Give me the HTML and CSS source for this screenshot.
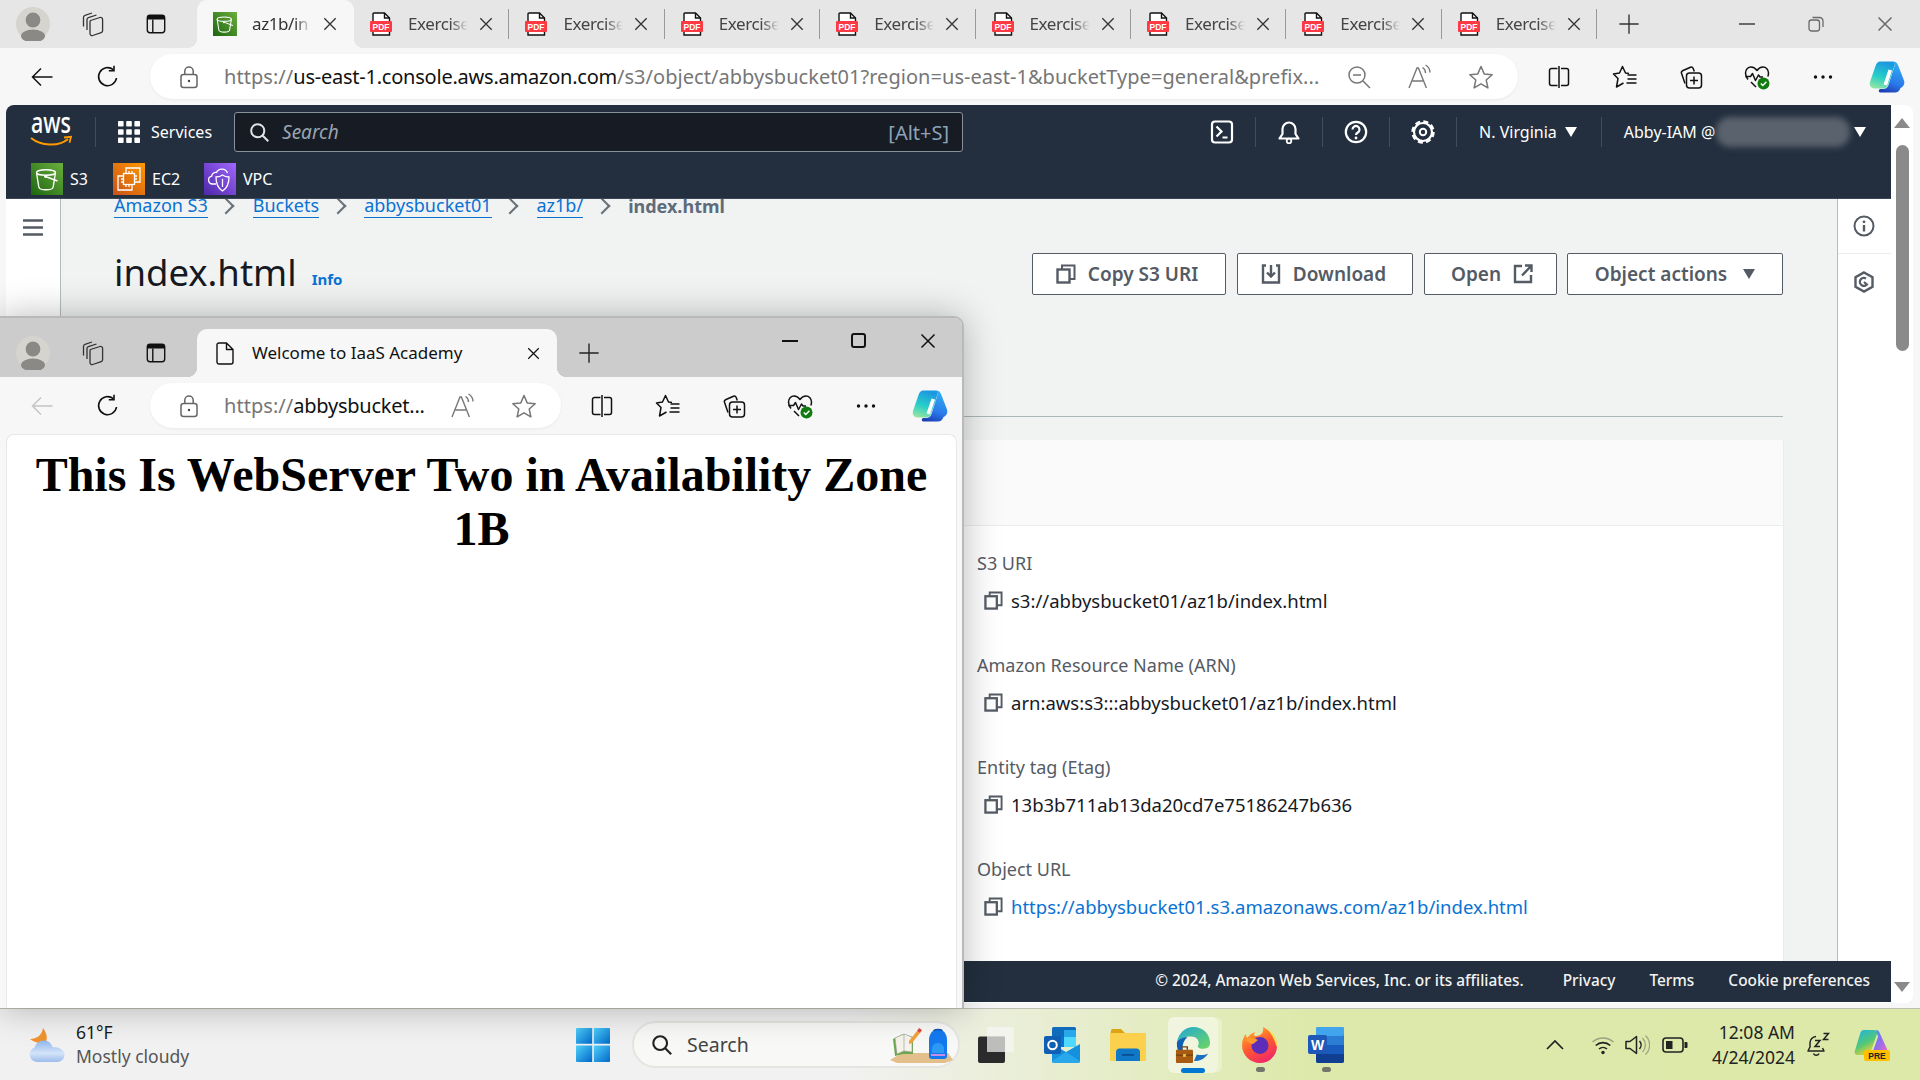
FILE: index.html
```html
<!DOCTYPE html>
<html lang="en">
<head>
<meta charset="utf-8">
<title>index.html</title>
<link rel="stylesheet" href="styles.css">
</head>
<body>
<svg class="defs" aria-hidden="true">
  <defs>
    <linearGradient id="g-s3" x1="0" y1="1" x2="1" y2="0"><stop offset="0" stop-color="#1b660f"/><stop offset="1" stop-color="#6cae3e"/></linearGradient>
    <linearGradient id="g-ec2" x1="0" y1="1" x2="1" y2="0"><stop offset="0" stop-color="#c8511b"/><stop offset="1" stop-color="#f90"/></linearGradient>
    <linearGradient id="g-vpc" x1="0" y1="1" x2="1" y2="0"><stop offset="0" stop-color="#4d27a8"/><stop offset="1" stop-color="#a166ff"/></linearGradient>
    <linearGradient id="g-cop1" x1="0.5" y1="0" x2="0.2" y2="1"><stop offset="0" stop-color="#1b98e0"/><stop offset="0.55" stop-color="#28cfc8"/><stop offset="1" stop-color="#98e6a0"/></linearGradient>
    <linearGradient id="g-cop2" x1="0.6" y1="0" x2="0.3" y2="1"><stop offset="0" stop-color="#30b0f0"/><stop offset="0.65" stop-color="#2a78ea"/><stop offset="1" stop-color="#1c40b4"/></linearGradient>
    <linearGradient id="g-cloud" x1="0" y1="0" x2="0" y2="1"><stop offset="0" stop-color="#8fb6ee"/><stop offset="0.6" stop-color="#d4e3f8"/><stop offset="1" stop-color="#9bbcec"/></linearGradient>
    <linearGradient id="g-win" x1="0" y1="0" x2="1" y2="1"><stop offset="0" stop-color="#4fd0fb"/><stop offset="1" stop-color="#0068c8"/></linearGradient>
    <linearGradient id="g-edge" x1="0" y1="0" x2="1" y2="1"><stop offset="0" stop-color="#1fa8d8"/><stop offset="1" stop-color="#6fd660"/></linearGradient>
    <linearGradient id="g-fox" x1="0.2" y1="0" x2="0.7" y2="1"><stop offset="0" stop-color="#ffb52e"/><stop offset="0.5" stop-color="#ff5a2e"/><stop offset="1" stop-color="#f0246e"/></linearGradient>
    <linearGradient id="g-pre" x1="0" y1="0" x2="1" y2="1"><stop offset="0" stop-color="#2aa8ea"/><stop offset="0.5" stop-color="#8a6ff0"/><stop offset="1" stop-color="#f06ac0"/></linearGradient>
    <linearGradient id="g-pre2" x1="0" y1="0" x2="0.5" y2="1"><stop offset="0" stop-color="#1fb0e8"/><stop offset="0.6" stop-color="#50c878"/><stop offset="1" stop-color="#f0d030"/></linearGradient>

    <symbol id="i-avatar" viewBox="0 0 34 34"><circle cx="17" cy="17" r="17" fill="#d6d4cf"/><circle cx="17" cy="13" r="7.4" fill="#8b8985"/><ellipse cx="17" cy="29" rx="12" ry="6.5" fill="#8b8985"/></symbol>
    <symbol id="i-work" viewBox="0 0 26 26"><g fill="none" stroke="#333" stroke-width="1.3" stroke-linejoin="round"><path d="M10.5 9.5l9.5-3a2 2 0 0 1 2.6 1.9v11.3a2 2 0 0 1-1.4 1.9l-8.5 2.9a2 2 0 0 1-2.7-1.9V11.4a2 2 0 0 1 .5-1.9z"/><path d="M7 19V8.6A2 2 0 0 1 8.4 6.700l8.100-2.700"/><path d="M3.500 15.500V6.200A2 2 0 0 1 5 4.300l7-2.300"/></g></symbol>
    <symbol id="i-vtabs" viewBox="0 0 24 24"><rect x="2.500" y="2.500" width="19" height="19" rx="3" fill="none" stroke="#111" stroke-width="1.5"/><path d="M2.500 5.500a3 3 0 0 1 3-3h13a3 3 0 0 1 3 3V7h-19z" fill="#111"/><path d="M8.500 7v14.500" stroke="#111" stroke-width="1.5"/></symbol>
    <symbol id="i-x" viewBox="0 0 16 16"><path d="M1.500 1.500l13 13M14.500 1.500l-13 13" fill="none" stroke="currentColor" stroke-width="1.500"/></symbol>
    <symbol id="i-plus" viewBox="0 0 24 24"><path d="M12 1.500v21M1.500 12h21" fill="none" stroke="currentColor" stroke-width="1.500"/></symbol>
    <symbol id="i-pdf" viewBox="0 0 24 24"><path d="M4 23V2a1 1 0 0 1 1-1h10.500L20.500 6v17z" fill="#fff" stroke="#111" stroke-width="1.400"/><path d="M15.500 1v5h5" fill="none" stroke="#111" stroke-width="1.400"/><rect x="1" y="9" width="22" height="11" rx="1" fill="#fb3a43"/><text x="12" y="17.800" text-anchor="middle" class="svg-pdf">PDF</text></symbol>
    <symbol id="i-s3" viewBox="0 0 32 32"><rect width="32" height="32" fill="url(#g-s3)"/><g fill="none" stroke="#fff" stroke-width="1.400"><ellipse cx="15" cy="9.500" rx="9.500" ry="2.800"/><path d="M5.500 9.500l2.300 14.500c.3 1.800 3.600 2.800 7.200 2.800s6.900-1 7.200-2.800l2.300-14.500"/><path d="M14.500 13.500l12 4.500"/></g><circle cx="14.500" cy="13.500" r="1.400" fill="#fff"/></symbol>
    <symbol id="i-ec2" viewBox="0 0 32 32"><rect width="32" height="32" fill="url(#g-ec2)"/><g fill="none" stroke="#fff" stroke-width="1.300"><path d="M13 8V5h14v14h-3M8 13H5v14h14v-3"/><rect x="10.500" y="10.500" width="11" height="11"/><path d="M13 8v2.500M16 8v2.500M19 8v2.500M13 21.500V24M16 21.500V24M19 21.500V24M8 13h2.500M8 16h2.500M8 19h2.500M21.500 13H24M21.500 16H24M21.500 19H24"/></g></symbol>
    <symbol id="i-vpc" viewBox="0 0 32 32"><rect width="32" height="32" fill="url(#g-vpc)"/><g fill="none" stroke="#fff" stroke-width="1.300"><path d="M12 21H8.500a4 4 0 0 1-.8-7.900 4 4 0 0 1 4.800-3.700A6 6 0 0 1 23.500 10"/><path d="M18.500 12c2 1.500 4 2 6.500 2 0 6-1.500 11-6.500 14-5-3-6.500-8-6.500-14 2.500 0 4.500-.5 6.500-2z"/><path d="M18.500 16v8"/></g></symbol>
    <symbol id="i-back" viewBox="0 0 24 24"><path d="M22.500 12H2.500M11 3.500L2.500 12l8.500 8.500" fill="none" stroke="currentColor" stroke-width="1.500"/></symbol>
    <symbol id="i-reload" viewBox="0 0 24 24"><path d="M20.500 13a9 9 0 1 1-3.200-8.300" fill="none" stroke="#111" stroke-width="1.600"/><path d="M18 .8v5h-5.200" fill="none" stroke="#111" stroke-width="1.600"/></symbol>
    <symbol id="i-lock" viewBox="0 0 24 24"><rect x="4" y="9.500" width="16" height="13" rx="2.500" fill="none" stroke="#666" stroke-width="1.500"/><path d="M7.800 9.500V6.300a4.200 4.200 0 0 1 8.400 0v3.200" fill="none" stroke="#666" stroke-width="1.500"/><circle cx="12" cy="16" r="1.200" fill="#444"/></symbol>
    <symbol id="i-zoom" viewBox="0 0 24 24"><g fill="none" stroke="#777" stroke-width="1.500"><circle cx="10" cy="10" r="8"/><path d="M16 16l7 7M6 10h8"/></g></symbol>
    <symbol id="i-read" viewBox="0 0 26 26"><g fill="none" stroke="#777" stroke-width="1.400"><path d="M2 24L10 4h1.400l8 20M5.500 17h10.400"/><path d="M15.500 3.500c2.200 1.200 3 3 3 5.500M18.500 1c3 1.700 4.500 4.300 4.500 7.500"/></g></symbol>
    <symbol id="i-star" viewBox="0 0 26 26"><path d="M13 2.500l3.200 7.400 8 .8-6 5.300 1.700 7.900-6.900-4.100-6.900 4.100 1.700-7.900-6-5.300 8-.8z" fill="none" stroke="#777" stroke-width="1.500" stroke-linejoin="round"/></symbol>
    <symbol id="i-split" viewBox="0 0 24 24"><g fill="none" stroke="#111" stroke-width="1.500"><path d="M10.500 3.500H4.500a2 2 0 0 0-2 2v13a2 2 0 0 0 2 2h6M14 3.500h5.500a2 2 0 0 1 2 2v13a2 2 0 0 1-2 2H14"/><path d="M12 1v22"/></g></symbol>
    <symbol id="i-favs" viewBox="0 0 26 26"><g fill="none" stroke="#111" stroke-width="1.500" stroke-linejoin="round"><path d="M17 9.500L13.500 9 10.500 2.500 7.500 9 1.500 10 6 14.500 4.500 23 11.500 19"/><path d="M15.500 11h9M15.500 15h9M14.500 19h10"/></g></symbol>
    <symbol id="i-coll" viewBox="0 0 26 26"><g fill="none" stroke="#111" stroke-width="1.500" stroke-linejoin="round"><path d="M7 19.500L3.500 9.300a2 2 0 0 1 1-2.500l8-3.600a2 2 0 0 1 2.600 1l1.200 3.300"/><rect x="8.500" y="9" width="15" height="15" rx="3"/><path d="M16 12.500v8M12 16.500h8"/></g></symbol>
    <symbol id="i-health" viewBox="0 0 26 26"><g fill="none" stroke="#111" stroke-width="1.500" stroke-linejoin="round"><path d="M4 15.500C2 13 1.500 11 1.500 9c0-3.500 2.500-6 5.500-6 2.500 0 4.500 1.300 6 3.500C14.500 4.300 16.500 3 19 3c3 0 5.500 2.500 5.500 6 0 1.300-.2 2.300-.7 3.500"/><path d="M1.500 12.500h5l2-3 3 7 3-5.500 1.500 2h3"/><path d="M7 18l5 5"/></g><circle cx="19.500" cy="19.500" r="6" fill="#107c10"/><path d="M16.800 19.500l2 2 3.600-3.800" fill="none" stroke="#fff" stroke-width="1.500"/></symbol>
    <symbol id="i-more" viewBox="0 0 24 24"><circle cx="4.500" cy="12" r="1.700" fill="#111"/><circle cx="12" cy="12" r="1.700" fill="#111"/><circle cx="19.500" cy="12" r="1.700" fill="#111"/></symbol>
    <symbol id="i-copilot" viewBox="0 0 36 32"><path d="M11 .5h12.500c2 0 2.800 1.200 2.300 3L19 24c-.8 2.500-2.500 3.500-5 3.500H5.500C2 27.500 0 24.500 1 21L6.500 5C7.500 2 9 .5 11 .5z" fill="url(#g-cop1)"/><path d="M24 .5c2.500 0 4 1 5 3.500l6 15.500c1 3.500-.5 6-3.500 7.500-1 3-3 4.500-5.500 4.500H12c-2.500 0-3-2-1-3.500h3c3 0 4.500-1.500 5.500-4l6-19c.5-2 .5-3.500-1.500-4.500z" fill="url(#g-cop2)"/><path d="M19.500 8.500l3.500 1-5 15-3.500-1z" fill="#fff"/></symbol>
    <symbol id="i-grid" viewBox="0 0 22 22"><g fill="#fff"><rect width="5.600" height="5.600" rx=".8"/><rect x="8.200" width="5.600" height="5.600" rx=".8"/><rect x="16.400" width="5.600" height="5.600" rx=".8"/><rect y="8.200" width="5.600" height="5.600" rx=".8"/><rect x="8.200" y="8.200" width="5.600" height="5.600" rx=".8"/><rect x="16.400" y="8.200" width="5.600" height="5.600" rx=".8"/><rect y="16.400" width="5.600" height="5.600" rx=".8"/><rect x="8.200" y="16.400" width="5.600" height="5.600" rx=".8"/><rect x="16.400" y="16.400" width="5.600" height="5.600" rx=".8"/></g></symbol>
    <symbol id="i-search" viewBox="0 0 24 24"><circle cx="10" cy="10" r="7.500" fill="none" stroke="currentColor" stroke-width="2.300"/><path d="M15.500 15.500l6.500 6.500" stroke="currentColor" stroke-width="2.300"/></symbol>
    <symbol id="i-term" viewBox="0 0 24 24"><rect x="2" y="1.500" width="20" height="21" rx="3" fill="none" stroke="#fff" stroke-width="2.200"/><path d="M6.500 6.500l5 5-5 5" fill="none" stroke="#fff" stroke-width="2.200"/><path d="M12.500 17.500h5" stroke="#fff" stroke-width="2.200"/></symbol>
    <symbol id="i-bell" viewBox="0 0 24 24"><path d="M12 2.500a6.500 6.500 0 0 0-6.500 6.500v5L2.500 18.500h19L18.500 14V9A6.500 6.500 0 0 0 12 2.500z" fill="none" stroke="#fff" stroke-width="2.200" stroke-linejoin="round"/><circle cx="12" cy="21" r="2.300" fill="none" stroke="#fff" stroke-width="1.800"/></symbol>
    <symbol id="i-help" viewBox="0 0 24 24"><circle cx="12" cy="12" r="10.200" fill="none" stroke="#fff" stroke-width="2.200"/><path d="M8.500 9.500a3.500 3.500 0 1 1 5.300 3c-1.200.7-1.800 1.300-1.800 2.500" fill="none" stroke="#fff" stroke-width="2.200"/><circle cx="12" cy="18" r="1.400" fill="#fff"/></symbol>
    <symbol id="i-gear" viewBox="0 0 24 24"><circle cx="12" cy="12" r="9" fill="none" stroke="#fff" stroke-width="2.200"/><circle cx="12" cy="12" r="10.500" fill="none" stroke="#fff" stroke-width="2.500" stroke-dasharray="5 3.250"/><circle cx="12" cy="12" r="3.200" fill="none" stroke="#fff" stroke-width="2"/></symbol>
    <symbol id="i-burger" viewBox="0 0 20 17"><path d="M0 1.500h20M0 8.500h20M0 15.500h20" stroke="#545b64" stroke-width="2.600"/></symbol>
    <symbol id="i-info" viewBox="0 0 22 22"><circle cx="11" cy="11" r="9.500" fill="none" stroke="#545b64" stroke-width="2"/><path d="M11 10v6.500" stroke="#545b64" stroke-width="2.400"/><circle cx="11" cy="6.800" r="1.400" fill="#545b64"/></symbol>
    <symbol id="i-hex" viewBox="0 0 22 22"><path d="M11 1.500l8.500 4.800v9.400L11 20.500l-8.500-4.800V6.300z" fill="none" stroke="#545b64" stroke-width="2.400"/><path d="M14.500 12.500A4 4 0 1 1 13 7.500M11 11l3.500 3" fill="none" stroke="#545b64" stroke-width="2.200"/></symbol>
    <symbol id="i-copy" viewBox="0 0 20 20"><rect x="1.500" y="5.500" width="12" height="13" fill="none" stroke="#545b64" stroke-width="2.400"/><path d="M6 5V1.500h12.500V15H14" fill="none" stroke="#545b64" stroke-width="2"/></symbol>
    <symbol id="i-down" viewBox="0 0 20 20"><path d="M5 1.500H2v17h16v-17h-3" fill="none" stroke="#545b64" stroke-width="2.400"/><path d="M10 1v11M6 8.500l4 4 4-4" fill="none" stroke="#545b64" stroke-width="2.400"/></symbol>
    <symbol id="i-ext" viewBox="0 0 20 20"><path d="M9 2H2v16h16v-7" fill="none" stroke="#545b64" stroke-width="2.400"/><path d="M12 1.500h6.500V8M18 2l-9 9.500" fill="none" stroke="#545b64" stroke-width="2.400"/></symbol>
    <symbol id="i-doc" viewBox="0 0 18 23"><path d="M1 3a2 2 0 0 1 2-2h7.500L17 7.500V20a2 2 0 0 1-2 2H3a2 2 0 0 1-2-2zM10.500 1v6.500H17" fill="none" stroke="#111" stroke-width="1.400" stroke-linejoin="round"/></symbol>
    <symbol id="i-restore" viewBox="0 0 16 16"><rect x="1" y="4" width="10.500" height="11" rx="2.500" fill="none" stroke="currentColor" stroke-width="1.300"/><path d="M4.500 1.500h7a3.500 3.500 0 0 1 3.500 3.500v6" fill="none" stroke="currentColor" stroke-width="1.300"/></symbol>
    <symbol id="i-weather" viewBox="0 0 36 36"><path d="M14 1c3 4 5 9 3 14-5 2-11 1-16-3 7 0 12-4 13-11z" fill="#f0932e"/><path d="M8 35a7.500 7.500 0 0 1-2.500-14.500C7 16 11 13 15.500 13.500c4 .3 7 3 8 6.500 7 0 12 3.500 12 8 0 4-3.500 7-7.500 7z" fill="url(#g-cloud)"/></symbol>
    <symbol id="i-win" viewBox="0 0 34 34"><g fill="url(#g-win)"><path d="M1 0h15.200v15.800H0V1a1 1 0 0 1 1-1z"/><path d="M17.800 0H33a1 1 0 0 1 1 1v14.800H17.800z"/><path d="M0 17.400h16.200V34H1a1 1 0 0 1-1-1z"/><path d="M17.800 17.400H34V33a1 1 0 0 1-1 1H17.800z"/></g></symbol>
    <symbol id="i-study" viewBox="0 0 70 36"><path d="M5 33l12-7h46l5 7-8 3H12z" fill="#e3bf8c"/><path d="M8 12l10-5 10 3 0 17-10 0-8 2z" fill="#6aa84f"/><path d="M10 11l9-4 8 3v15l-8-1-7 3z" fill="#f5f3ea" stroke="#9a9a90" stroke-width=".6"/><path d="M19 7v17" stroke="#aaa" stroke-width=".8"/><path d="M24 14l8-10 3 2-8 10-3 1z" fill="#f3a13b"/><path d="M32 4l2-3 3 2-2 3z" fill="#e0483c"/><path d="M44 13c0-6 4-11 9-11s9 5 9 11v16c0 2-1 3-3 3H47c-2 0-3-1-3-3z" fill="#1479ee"/><path d="M47 22c0-4 3-6 6-6s6 2 6 6v4H47z" fill="#2c9af5"/><path d="M46 28h14" stroke="#c58ee8" stroke-width="2"/><path d="M49 4c0-2 8-2 8 0" fill="none" stroke="#0d55b8" stroke-width="1.500"/></symbol>
    <symbol id="i-taskview" viewBox="0 0 36 36"><rect y="9.500" width="27" height="26.500" rx="2" fill="#2b2b2b"/><rect x="9" y="0" width="27" height="25" rx="1.500" fill="#f4f4f0" fill-opacity=".85"/><rect x="9" y="9.500" width="18" height="15.500" fill="#bdbdbb"/></symbol>
    <symbol id="i-outlook" viewBox="0 0 36 36"><rect x="8" y="0" width="24" height="20" rx="1.500" fill="#0f6cbd"/><rect x="20" y="3" width="12" height="10" fill="#28a8ea"/><rect x="8" y="10" width="12" height="10" fill="#0078d4"/><rect x="20" y="10" width="12" height="10" fill="#50d9ff"/><path d="M8 17l14 8 14-8v17a2 2 0 0 1-2 2H10a2 2 0 0 1-2-2z" fill="#1490df"/><path d="M8 34l14-9 14 9a2 2 0 0 1-2 2H10a2 2 0 0 1-2-2z" fill="#28a8ea"/><rect y="9" width="17" height="18" rx="2" fill="#0f5fb5"/><circle cx="8.500" cy="18" r="4.300" fill="none" stroke="#fff" stroke-width="2"/></symbol>
    <symbol id="i-folder" viewBox="0 0 36 32"><path d="M1 1.500A1.500 1.500 0 0 1 2.500 0H11l4 4h19.500A1.500 1.500 0 0 1 36 5.500V10H0z" fill="#dba410"/><rect y="4" width="36" height="28" rx="1.500" fill="#fbd04d"/><path d="M6 32v-9c0-2 1.500-3.500 3.500-3.500h17c2 0 3.500 1.500 3.500 3.500v9z" fill="#0f78c8"/><rect x="12" y="25" width="12" height="1.800" fill="#0a4f90"/></symbol>
    <symbol id="i-edge" viewBox="0 0 36 38"><path d="M1 16C3 6 10 0 18.500 0 28 0 36 7 36 17c0 4-3 6-7 6-3 0-6-1-6-3 1-1 1-2 1-3 0-4-3-7-8-7-6 0-12 2-15 6z" fill="url(#g-edge)"/><path d="M1 16c2-3 7-6 11-5-3 2-5 6-5 11 0 7 5 13 12 14-10 1-19-8-18-20z" fill="#0f5fb5"/><path d="M19 36c6 0 11-2 15-8-4 2-8 2-12 1z" fill="#1a6fc0"/><rect y="24" width="18" height="14" rx="1" fill="#a85b12"/><path d="M6 24v-3h6v3" fill="none" stroke="#7a420c" stroke-width="1.500"/><rect y="29" width="18" height="1.500" fill="#7a420c"/><rect x="7.500" y="28.500" width="3" height="3" fill="#f0c040"/></symbol>
    <symbol id="i-firefox" viewBox="0 0 36 36"><path d="M18 36C8 36 0 28 0 18 0 13 2 9 4 7c0 2 .5 3 1.500 4C7 8 10 6 13 5c-1 2-1 3-.500 4C17 9 22 8 21 0c6 3 14 9 14 19 0 9-7 17-17 17z" fill="url(#g-fox)"/><path d="M25 2c5 3 10 8 10 15 0 1 0 2-.3 3C33 14 30 7 25 2z" fill="#ffe14d"/><circle cx="18" cy="18.500" r="8.500" fill="#5b2db8"/><path d="M4 13c4-3 8-2 12 0l-5 4c-3 0-5-2-7-4z" fill="#ff9a2e"/></symbol>
    <symbol id="i-word" viewBox="0 0 36 36"><rect x="8" width="28" height="36" rx="2" fill="#2b7cd3"/><rect x="8" width="28" height="9" rx="2" fill="#41a5ee"/><rect x="8" y="18" width="28" height="9" fill="#185abd"/><path d="M8 27h28v7a2 2 0 0 1-2 2H10a2 2 0 0 1-2-2z" fill="#103f91"/><rect y="8" width="19" height="19" rx="2" fill="#1e58b8"/><text x="9.500" y="23" text-anchor="middle" class="svg-word">W</text></symbol>
    <symbol id="i-chev" viewBox="0 0 20 12"><path d="M2 10l8-8 8 8" fill="none" stroke="#222" stroke-width="1.700"/></symbol>
    <symbol id="i-wifi" viewBox="0 0 24 24"><path d="M1.500 9c6-5.500 15-5.500 21 0" fill="none" stroke="#9aa283" stroke-width="1.500"/><path d="M4.700 12.500c4.200-3.800 10.400-3.800 14.600 0M8 16c2.300-2 5.700-2 8 0" fill="none" stroke="#222" stroke-width="1.600"/><circle cx="12" cy="19.500" r="1.700" fill="#222"/></symbol>
    <symbol id="i-vol" viewBox="0 0 26 24"><path d="M2 8.500h4l6.500-5v17l-6.500-5H2z" fill="none" stroke="#222" stroke-width="1.500" stroke-linejoin="round"/><path d="M15.500 8a6 6 0 0 1 0 8" fill="none" stroke="#222" stroke-width="1.500"/><path d="M18.500 5a10 10 0 0 1 0 14M21.500 2.500a13 13 0 0 1 0 19" fill="none" stroke="#9aa283" stroke-width="1.300"/></symbol>
    <symbol id="i-batt" viewBox="0 0 26 18"><rect x="1" y="2" width="20" height="14" rx="3" fill="none" stroke="#222" stroke-width="1.600"/><rect x="4" y="5" width="6.500" height="8" fill="#222"/><path d="M22.500 6h2a1 1 0 0 1 1 1v4a1 1 0 0 1-1 1h-2z" fill="#222"/></symbol>
    <symbol id="i-zz" viewBox="0 0 24 26"><path d="M10 4.500a6.500 6.500 0 0 0-6 6.500v4L2 19h16l-1.500-3" fill="none" stroke="#222" stroke-width="1.500" stroke-linejoin="round"/><path d="M7.500 21.500a3 3 0 0 0 5.500 0" fill="none" stroke="#222" stroke-width="1.500"/><path d="M9 8.500h5l-5 6h5M17.500 1.500h5l-5 6h5" fill="none" stroke="#222" stroke-width="1.500"/></symbol>
    <symbol id="i-pre" viewBox="0 0 36 32"><path d="M10 1h10c2 0 3 1 3.500 2.500L17 22c-1 2.500-3 4-5 4H4c-2.500 0-4-2-3-4.500L6 5c.700-2.500 2-4 4-4z" fill="url(#g-pre2)"/><path d="M22 1c2 0 3 1 3.500 2.500L33 20c1 3-1 6-4 6H15c2-1 3.500-2.500 4-4l5-14z" fill="url(#g-pre)"/><rect x="10" y="21" width="26" height="11" rx="2" fill="#ffc000"/><text x="23" y="29.500" text-anchor="middle" class="svg-pre">PRE</text></symbol>
  </defs>
</svg>

<div class="desktop">
  <main class="browser">
    <header class="strip">
      <div class="lead">
        <span class="lead-avatar"><svg class="ic-34"><use href="#i-avatar"/></svg></span>
        <span class="lead-work"><svg class="ic-26"><use href="#i-work"/></svg></span>
        <span class="lead-vt"><svg class="ic-22"><use href="#i-vtabs"/></svg></span>
      </div>
      <div class="tab tab-active">
        <svg class="ic-24"><use href="#i-s3"/></svg>
        <span class="tab-label tab-label-active">az1b/in</span>
        <svg class="ic-x"><use href="#i-x"/></svg>
      </div>
      <div class="tab"><svg class="ic-24"><use href="#i-pdf"/></svg><span class="tab-label">Exercise</span><svg class="ic-x"><use href="#i-x"/></svg><i class="tab-sep"></i></div>
      <div class="tab"><svg class="ic-24"><use href="#i-pdf"/></svg><span class="tab-label">Exercise</span><svg class="ic-x"><use href="#i-x"/></svg><i class="tab-sep"></i></div>
      <div class="tab"><svg class="ic-24"><use href="#i-pdf"/></svg><span class="tab-label">Exercise</span><svg class="ic-x"><use href="#i-x"/></svg><i class="tab-sep"></i></div>
      <div class="tab"><svg class="ic-24"><use href="#i-pdf"/></svg><span class="tab-label">Exercise</span><svg class="ic-x"><use href="#i-x"/></svg><i class="tab-sep"></i></div>
      <div class="tab"><svg class="ic-24"><use href="#i-pdf"/></svg><span class="tab-label">Exercise</span><svg class="ic-x"><use href="#i-x"/></svg><i class="tab-sep"></i></div>
      <div class="tab"><svg class="ic-24"><use href="#i-pdf"/></svg><span class="tab-label">Exercise</span><svg class="ic-x"><use href="#i-x"/></svg><i class="tab-sep"></i></div>
      <div class="tab"><svg class="ic-24"><use href="#i-pdf"/></svg><span class="tab-label">Exercise</span><svg class="ic-x"><use href="#i-x"/></svg><i class="tab-sep"></i></div>
      <div class="tab"><svg class="ic-24"><use href="#i-pdf"/></svg><span class="tab-label">Exercise</span><svg class="ic-x"><use href="#i-x"/></svg><i class="tab-sep"></i></div>
      <span class="new-tab"><svg class="ic-22 grey-ink"><use href="#i-plus"/></svg></span>
      <div class="win-ctl win-ctl-main">
        <span class="ctl"><i class="ctl-min"></i></span>
        <span class="ctl"><svg class="ic-16"><use href="#i-restore"/></svg></span>
        <span class="ctl"><svg class="ic-16"><use href="#i-x"/></svg></span>
      </div>
    </header>

    <div class="toolbar">
      <span class="nav"><svg class="ic-24"><use href="#i-back"/></svg></span>
      <span class="nav"><svg class="ic-24"><use href="#i-reload"/></svg></span>
      <div class="omni omni-main">
        <svg class="ic-24 omni-lock"><use href="#i-lock"/></svg>
        <span class="url"><span class="url-dim">https://</span><span class="url-host">us-east-1.console.aws.amazon.com</span><span class="url-dim">/s3/object/abbysbucket01?region=us-east-1&amp;bucketType=general&amp;prefix...</span></span>
        <span class="omni-tail">
          <svg class="ic-24 tail-zoom"><use href="#i-zoom"/></svg>
          <svg class="ic-26 tail-read"><use href="#i-read"/></svg>
          <svg class="ic-26 tail-star"><use href="#i-star"/></svg>
        </span>
      </div>
      <div class="tools">
        <span class="nav"><svg class="ic-24"><use href="#i-split"/></svg></span>
        <span class="nav"><svg class="ic-26"><use href="#i-favs"/></svg></span>
        <span class="nav"><svg class="ic-26"><use href="#i-coll"/></svg></span>
        <span class="nav"><svg class="ic-26"><use href="#i-health"/></svg></span>
        <span class="nav"><svg class="ic-24"><use href="#i-more"/></svg></span>
        <span class="nav"><svg class="ic-cop"><use href="#i-copilot"/></svg></span>
      </div>
    </div>

    <div class="viewport">
      <div class="console">
        <div class="aws-top">
          <div class="aws-row1">
            <svg class="aws-logo" viewBox="0 0 42 28"><text x="0" y="15" class="aws-word" textLength="40" lengthAdjust="spacingAndGlyphs">aws</text><path d="M0 20C10 28 28 29 37 21" fill="none" stroke="#f90" stroke-width="2"/><path d="M33 19.500l7-.7-1.500 6" fill="none" stroke="#f90" stroke-width="1.800"/></svg>
            <i class="vsep vsep-logo"></i>
            <svg class="ic-grid"><use href="#i-grid"/></svg>
            <span class="aws-services">Services</span>
            <div class="aws-search">
              <svg class="ic-search"><use href="#i-search"/></svg>
              <span class="aws-search-text">Search</span>
              <span class="aws-kbd">[Alt+S]</span>
            </div>
            <span class="aws-ico aws-ico-term"><svg class="ic-24"><use href="#i-term"/></svg></span>
            <i class="vsep"></i>
            <span class="aws-ico"><svg class="ic-24"><use href="#i-bell"/></svg></span>
            <i class="vsep"></i>
            <span class="aws-ico"><svg class="ic-24"><use href="#i-help"/></svg></span>
            <i class="vsep"></i>
            <span class="aws-ico"><svg class="ic-24"><use href="#i-gear"/></svg></span>
            <i class="vsep"></i>
            <span class="aws-region">N. Virginia</span><i class="caret caret-white caret-region"></i>
            <i class="vsep vsep-region"></i>
            <span class="aws-user">Abby-IAM @</span><span class="aws-blur"></span><i class="caret caret-white"></i>
          </div>
          <div class="aws-row2">
            <span class="fav fav-s3"><svg class="ic-32"><use href="#i-s3"/></svg>S3</span>
            <span class="fav fav-ec2"><svg class="ic-32"><use href="#i-ec2"/></svg>EC2</span>
            <span class="fav"><svg class="ic-32"><use href="#i-vpc"/></svg>VPC</span>
          </div>
        </div>

        <div class="console-body">
          <aside class="sidenav"><svg class="ic-burger"><use href="#i-burger"/></svg></aside>
          <section class="content">
            <nav class="crumbs">
              <a class="crumb">Amazon S3</a><i class="crumb-chev"></i>
              <a class="crumb">Buckets</a><i class="crumb-chev"></i>
              <a class="crumb">abbysbucket01</a><i class="crumb-chev"></i>
              <a class="crumb">az1b/</a><i class="crumb-chev"></i>
              <span class="crumb-now">index.html</span>
            </nav>
            <div class="title-row">
              <h1 class="title">index.html</h1>
              <a class="info">Info</a>
              <div class="actions">
                <span class="btn btn-copy"><svg class="ic-20"><use href="#i-copy"/></svg>Copy S3 URI</span>
                <span class="btn btn-down"><svg class="ic-20"><use href="#i-down"/></svg>Download</span>
                <span class="btn btn-open">Open<svg class="ic-20"><use href="#i-ext"/></svg></span>
                <span class="btn btn-menu">Object actions<i class="caret caret-grey"></i></span>
              </div>
            </div>
            <hr class="tab-rule">
            <div class="card">
              <div class="card-head"></div>
              <div class="card-body">
                <dl class="props">
                  <dt>S3 URI</dt>
                  <dd><svg class="ic-18"><use href="#i-copy"/></svg>s3://abbysbucket01/az1b/index.html</dd>
                  <dt>Amazon Resource Name (ARN)</dt>
                  <dd><svg class="ic-18"><use href="#i-copy"/></svg>arn:aws:s3:::abbysbucket01/az1b/index.html</dd>
                  <dt>Entity tag (Etag)</dt>
                  <dd><svg class="ic-18"><use href="#i-copy"/></svg>13b3b711ab13da20cd7e75186247b636</dd>
                  <dt>Object URL</dt>
                  <dd><svg class="ic-18"><use href="#i-copy"/></svg><a class="prop-link">https://abbysbucket01.s3.amazonaws.com/az1b/index.html</a></dd>
                </dl>
              </div>
            </div>
          </section>
          <aside class="toolsnav">
            <span class="toolsnav-cell"><svg class="ic-22"><use href="#i-info"/></svg></span>
            <span class="toolsnav-cell"><svg class="ic-22"><use href="#i-hex"/></svg></span>
          </aside>
        </div>

        <footer class="aws-foot">
          <span class="foot-copy">© 2024, Amazon Web Services, Inc. or its affiliates.</span>
          <span>Privacy</span><span>Terms</span><span>Cookie preferences</span>
        </footer>
      </div>
      <div class="scrollbar">
        <i class="sb-up"></i>
        <i class="sb-thumb"></i>
        <i class="sb-down"></i>
      </div>
    </div>
  </main>

  <div class="popup">
    <header class="strip strip-pop">
      <div class="lead lead-pop">
        <span class="lead-avatar"><svg class="ic-34"><use href="#i-avatar"/></svg></span>
        <span class="lead-work"><svg class="ic-26"><use href="#i-work"/></svg></span>
        <span class="lead-vt"><svg class="ic-22"><use href="#i-vtabs"/></svg></span>
      </div>
      <div class="tab tab-active tab-pop">
        <svg class="ic-doc"><use href="#i-doc"/></svg>
        <span class="tab-title">Welcome to IaaS Academy</span>
        <svg class="ic-x-pop"><use href="#i-x"/></svg>
      </div>
      <span class="new-tab new-tab-pop"><svg class="ic-22"><use href="#i-plus"/></svg></span>
      <div class="win-ctl win-ctl-pop">
        <span class="ctl"><i class="ctl-min"></i></span>
        <span class="ctl"><i class="ctl-max"></i></span>
        <span class="ctl"><svg class="ic-16"><use href="#i-x"/></svg></span>
      </div>
    </header>
    <div class="toolbar">
      <span class="nav nav-off"><svg class="ic-24"><use href="#i-back"/></svg></span>
      <span class="nav"><svg class="ic-24"><use href="#i-reload"/></svg></span>
      <div class="omni omni-pop">
        <svg class="ic-24 omni-lock"><use href="#i-lock"/></svg>
        <span class="url"><span class="url-dim">https://</span><span class="url-host">abbysbucket...</span></span>
        <span class="omni-tail omni-tail-pop">
          <svg class="ic-26 tail-read"><use href="#i-read"/></svg>
          <svg class="ic-26 tail-star"><use href="#i-star"/></svg>
        </span>
      </div>
      <div class="tools">
        <span class="nav"><svg class="ic-24"><use href="#i-split"/></svg></span>
        <span class="nav"><svg class="ic-26"><use href="#i-favs"/></svg></span>
        <span class="nav"><svg class="ic-26"><use href="#i-coll"/></svg></span>
        <span class="nav"><svg class="ic-26"><use href="#i-health"/></svg></span>
        <span class="nav"><svg class="ic-24"><use href="#i-more"/></svg></span>
        <span class="nav"><svg class="ic-cop"><use href="#i-copilot"/></svg></span>
      </div>
    </div>
    <div class="pop-page">
      <h1 class="pop-h1">This Is WebServer Two in Availability Zone 1B</h1>
    </div>
  </div>
</div>

<footer class="taskbar">
  <div class="weather">
    <svg class="ic-36"><use href="#i-weather"/></svg>
    <div class="weather-text"><span class="weather-temp">61°F</span><span class="weather-desc">Mostly cloudy</span></div>
  </div>
  <svg class="ic-win"><use href="#i-win"/></svg>
  <div class="tb-search">
    <svg class="ic-tbs"><use href="#i-search"/></svg>
    <span class="tb-search-text">Search</span>
    <svg class="ic-study"><use href="#i-study"/></svg>
  </div>
  <div class="tb-apps">
    <span class="tb-app"><svg class="ic-36"><use href="#i-taskview"/></svg></span>
    <span class="tb-app"><svg class="ic-36"><use href="#i-outlook"/></svg></span>
    <span class="tb-app"><svg class="ic-36"><use href="#i-folder"/></svg></span>
    <span class="tb-app tb-app-on"><span class="tb-tile"><svg class="ic-36"><use href="#i-edge"/></svg></span><i class="tb-bar"></i></span>
    <span class="tb-app"><svg class="ic-36"><use href="#i-firefox"/></svg><i class="tb-dot"></i></span>
    <span class="tb-app"><svg class="ic-36"><use href="#i-word"/></svg><i class="tb-dot"></i></span>
  </div>
  <div class="tray">
    <svg class="ic-tray-chev"><use href="#i-chev"/></svg>
    <svg class="ic-24 tray-wifi"><use href="#i-wifi"/></svg>
    <svg class="ic-26 tray-vol"><use href="#i-vol"/></svg>
    <svg class="ic-batt"><use href="#i-batt"/></svg>
    <div class="clock"><span>12:08 AM</span><span>4/24/2024</span></div>
    <svg class="ic-zz"><use href="#i-zz"/></svg>
    <svg class="ic-pre"><use href="#i-pre"/></svg>
  </div>
</footer>
</body>
</html>
```

FILE: styles.css
```css
* { box-sizing: border-box; }
html, body { margin: 0; height: 100%; }
body { width: 1920px; height: 1080px; overflow: hidden; font-family: "Noto Sans", "Open Sans", sans-serif; background: #f7f7f7; display: flex; flex-direction: column; color: #111; }
.defs { position: absolute; width: 0; height: 0; }
i { display: block; font-style: normal; }
svg { display: block; flex: none; }
.ic-16 { width: 16px; height: 16px; }
.ic-18 { width: 19px; height: 19px; }
.ic-20 { width: 20px; height: 20px; }
.ic-22 { width: 22px; height: 22px; }
.ic-24 { width: 24px; height: 24px; }
.ic-26 { width: 26px; height: 26px; }
.ic-32 { width: 32px; height: 32px; }
.ic-34 { width: 34px; height: 34px; }
.ic-36 { width: 36px; height: 36px; }
.ic-cop { width: 36px; height: 32px; }
.ic-x { width: 14px; height: 14px; color: #333; margin-left: 11px; }
.svg-pdf { font: bold 8.500px "Liberation Sans", sans-serif; fill: #fff; }
.svg-word { font: bold 14px "Liberation Sans", sans-serif; fill: #fff; }
.svg-pre { font: bold 8.500px "Liberation Sans", sans-serif; fill: #222; }

.desktop { position: relative; flex: none; height: 1008px; }
.browser { height: 1008px; display: flex; flex-direction: column; background: #f7f7f7; }

/* Edge chrome */
.strip { flex: none; height: 48px; display: flex; align-items: stretch; background: #e6e6e6; }
.lead { flex: none; width: 197px; display: flex; align-items: center; }
.lead-avatar { width: 66px; display: flex; justify-content: center; }
.lead-work { width: 54px; display: flex; justify-content: center; }
.lead-vt { width: 72px; display: flex; justify-content: center; }
.tab { flex: 0 0 155.400px; display: flex; align-items: center; padding-left: 15px; font-size: 17px; color: #444; position: relative; }
.tab-label { width: 60px; margin-left: 15px; padding-bottom: 2px; overflow: hidden; white-space: nowrap; letter-spacing: -.4px; -webkit-mask-image: linear-gradient(90deg, #000 70%, transparent); mask-image: linear-gradient(90deg, #000 70%, transparent); }
.tab-label-active { width: 60px; color: #333; }
.tab-sep { width: 1px; height: 30px; background: #9a9a9a; margin-left: auto; }
.tab-active { flex: 0 0 157px; padding-left: 16px; background: #f7f7f7; border-radius: 10px 10px 0 0; }
.tab-active::before, .tab-active::after { content: ""; position: absolute; bottom: 0; width: 10px; height: 10px; }
.tab-active::before { left: -10px; background: radial-gradient(circle at 0 0, transparent 10px, #f7f7f7 10.500px); }
.tab-active::after { right: -10px; background: radial-gradient(circle at 100% 0, transparent 10px, #f7f7f7 10.500px); }
.new-tab { width: 40px; margin-left: 12px; display: flex; align-items: center; justify-content: center; color: #222; }
.grey-ink { color: #333; }
.win-ctl { margin-left: auto; display: flex; align-items: center; }
.win-ctl-main { padding-right: 1px; color: #6a6a6a; }
.ctl { width: 69px; display: flex; align-items: center; justify-content: center; }
.ctl-min { width: 16px; height: 2px; background: currentColor; }
.ctl-max { width: 15px; height: 15px; border: 2px solid currentColor; border-radius: 3px; }

.toolbar { flex: none; height: 57px; padding: 6px 0 6px 9px; display: flex; align-items: center; background: #f7f7f7; }
.nav { flex: none; width: 66px; display: flex; justify-content: center; align-items: center; color: #111; }
.nav-off { color: #c4c4c4; }
.omni { flex: none; height: 45px; margin-left: 9px; background: #fff; border-radius: 23px; display: flex; align-items: center; padding-left: 27px; box-shadow: 0 1px 3px rgba(0,0,0,.06); }
.omni-main { width: 1368px; }
.omni-pop { width: 411px; }
.omni-lock { margin-right: 23px; }
.url { font-size: 20px; white-space: nowrap; }
.url-dim { color: #767676; letter-spacing: .04px; }
.url-host { color: #111; letter-spacing: -.23px; }
.omni-tail { margin-left: auto; display: flex; align-items: center; padding-right: 24px; }
.omni-tail-pop { padding-right: 24px; }
.tail-zoom { margin-right: 36px; }
.tail-star { margin-left: 35px; }
.tools { display: flex; flex: none; margin-left: 8px; }
.tools .nav:last-child { width: 62px; }

/* Main viewport */
.viewport { flex: 1; min-height: 0; margin: 0 7px 5px 6px; display: flex; background: #fff; border-radius: 8px; overflow: hidden; }
.console { flex: 1; min-width: 0; display: flex; flex-direction: column; }
.scrollbar { flex: none; width: 22px; position: relative; display: flex; flex-direction: column; align-items: center; padding: 13px 0 11px; }
.sb-up { width: 0; height: 0; border: 8px solid transparent; border-top: 0; border-bottom: 10px solid #8a8a8a; }
.sb-thumb { width: 13px; height: 206px; margin-top: 17px; border-radius: 7px; background: #8a8a8a; }
.sb-down { margin-top: auto; width: 0; height: 0; border: 8px solid transparent; border-bottom: 0; border-top: 10px solid #8a8a8a; }

.aws-top { flex: none; height: 94px; background: #232f3e; border-bottom: 1px solid #3b4756; color: #fff; display: flex; flex-direction: column; }
.aws-row1 { flex: none; height: 54px; display: flex; align-items: center; font-size: 16px; }
.aws-logo { width: 42px; height: 28px; margin-left: 25px; overflow: visible; }
.aws-word { font: 500 28px "Noto Sans", sans-serif; fill: #fff; }
.vsep { width: 1px; height: 30px; background: #414d5c; flex: none; }
.vsep-logo { margin-left: 22px; }
.ic-grid { width: 22px; height: 22px; margin-left: 22px; }
.aws-services { margin-left: 11px; white-space: nowrap; }
.aws-search { flex: none; width: 729px; height: 40px; margin-left: 22px; background: #161b24; border: 1px solid #87919c; border-radius: 3px; display: flex; align-items: center; padding: 0 13px 0 14px; }
.ic-search { width: 21px; height: 21px; color: #dfe3e6; }
.aws-search-text { margin-left: 12px; font-size: 19px; font-style: italic; color: #9aa5b1; }
.aws-kbd { margin-left: auto; font-size: 20px; color: #8da3b8; }
.aws-ico { width: 66px; display: flex; justify-content: center; }
.aws-ico-term { margin-left: 226px; }
.aws-region { margin-left: 22px; white-space: nowrap; }
.caret { width: 0; height: 0; border-left: 6px solid transparent; border-right: 6px solid transparent; border-top: 10px solid #fff; flex: none; }
.caret-region { margin-left: 8px; }
.vsep-region { margin-left: 24px; }
.aws-user { margin-left: 22px; white-space: nowrap; }
.aws-blur { width: 134px; height: 30px; margin-left: 1px; margin-right: 4px; background: #5a626d; border-radius: 14px; filter: blur(3px); flex: none; }
.caret-grey { border-top-color: #545b64; }
.aws-row2 { display: flex; align-items: flex-start; padding: 4px 0 0 25px; font-size: 16px; }
.fav { display: flex; align-items: center; gap: 7px; }
.fav-s3 { width: 82px; }
.fav-ec2 { width: 91px; }

.console-body { flex: 1; min-height: 0; display: flex; background: #f1f3f3; overflow: hidden; }
.sidenav { flex: none; width: 55px; background: #fff; border-right: 1px solid #b5bcbc; padding: 20px 0 0 17px; }
.ic-burger { width: 20px; height: 17px; }
.content { flex: 1; min-width: 0; padding: 0 54px 0 53px; }
.crumbs { display: flex; align-items: center; gap: 16.500px; margin-top: -6px; height: 26px; font-size: 18px; white-space: nowrap; }
.crumb { color: #0972d3; border-bottom: 1px solid #0972d3; line-height: 23px; }
.crumb-chev { width: 12px; height: 12px; border-top: 2.500px solid #687078; border-right: 2.500px solid #687078; transform: rotate(45deg); margin-left: -4px; margin-right: 4px; }
.crumb-now { color: #5f6b7a; font-weight: 700; }
.title-row { display: flex; align-items: flex-start; margin-top: 24px; }
.title { margin: 0; font-size: 36.500px; font-weight: 400; line-height: 58px; color: #16191f; white-space: nowrap; }
.info { margin: 24px 0 0 15px; font-size: 15px; font-weight: 700; line-height: 24px; color: #0972d3; }
.actions { margin-left: auto; margin-top: 10px; display: flex; gap: 11px; }
.btn { height: 42px; display: flex; align-items: center; justify-content: center; gap: 12px; background: #fff; border: 1px solid #545b64; border-radius: 2px; font-size: 19px; font-weight: 600; color: #545b64; white-space: nowrap; }
.btn-copy { width: 194px; padding-right: 4px; }
.btn-down { width: 176px; padding-right: 3px; }
.btn-open { width: 133px; padding-left: 3px; }
.btn-menu { width: 216px; gap: 16px; margin-left: -1px; }
.tab-rule { margin: 115px 0 0; border: 0; border-top: 1px solid #aab7b8; }
.card { margin-top: 23px; background: #fff; box-shadow: 0 1px 1px rgba(0,28,36,.2); }
.card-head { height: 86px; background: #fafafa; border-bottom: 1px solid #eaeded; }
.card-body { padding: 24px 0 80px 863px; }
.props { margin: 0; font-size: 18px; }
.props dt { color: #545b64; line-height: 26px; height: 26px; }
.props dd { margin: 0 0 30px 7px; display: flex; align-items: center; gap: 8px; height: 46px; color: #16191f; font-size: 18.500px; white-space: nowrap; padding-top: 3px; }
.prop-link { color: #0972d3; }
.toolsnav { flex: none; width: 54px; background: #fff; border-left: 1px solid #b5bcbc; }
.toolsnav-cell { height: 55px; padding-right: 2px; display: flex; align-items: center; justify-content: center; border-bottom: 1px solid #eaeded; }
.toolsnav-cell:last-child { border-bottom: 0; }

.aws-foot { flex: none; height: 41px; margin-bottom: 1px; padding: 0 21px 2px 0; background: #232f3e; color: #f2f3f3; display: flex; justify-content: flex-end; align-items: center; gap: 34px; font-size: 15.400px; font-weight: 500; white-space: nowrap; }
.foot-copy { margin-right: 5px; }

/* Pop-up window on the desktop */
.popup { position: absolute; left: 0; top: 316px; width: 964px; height: 692px; display: flex; flex-direction: column; background: #f7f7f7; border-top: 2px solid #b9b9b9; border-right: 2px solid #b9b9b9; border-top-right-radius: 10px; box-shadow: 0 0 36px rgba(0,0,0,.28); }
.strip-pop { height: 59px; background: #ccc; border-top-right-radius: 8px; align-items: flex-end; }
.lead-pop { height: 48px; }
.tab-pop { flex: 0 0 360px; height: 48px; padding-left: 19px; }
.ic-doc { width: 18px; height: 23px; }
.tab-title { margin-left: 18px; padding-bottom: 2px; color: #111; font-size: 17px; white-space: nowrap; }
.ic-x-pop { width: 13px; height: 13px; color: #111; margin-left: auto; margin-right: 17px; }
.new-tab-pop { margin-left: 12px; height: 48px; }
.win-ctl-pop { align-self: flex-start; height: 45px; color: #111; margin-left: auto; }
.pop-page { flex: 1; margin: 0 5px 0 6px; background: #fff; border: 1px solid #e8e8e8; border-bottom: 0; border-radius: 8px 8px 0 0; padding-top: 13px; }
.pop-h1 { margin: 0; font-family: "Liberation Serif", serif; font-weight: 700; font-size: 48px; line-height: 54px; text-align: center; color: #000; }

/* Taskbar */
.taskbar { flex: none; height: 72px; border-top: 1px solid #bdbfb3; display: flex; align-items: center; padding-left: 29px; background: linear-gradient(90deg, #f1f1f1 0, #f1f1f1 44%, #dde9ab 68%, #dde9a9 100%); }
.weather { width: 547px; display: flex; align-items: center; gap: 11px; }
.weather-text { display: flex; flex-direction: column; font-size: 17.500px; line-height: 24px; margin-top: -2px; }
.weather-temp { color: #1a1a1a; }
.weather-desc { color: #555; }
.ic-win { width: 34px; height: 34px; }
.tb-search { flex: none; width: 328px; height: 47px; margin-left: 22px; background: #f8f8f6; border: 2px solid #e4e4e0; border-radius: 24px; display: flex; align-items: center; padding-left: 17px; }
.ic-tbs { width: 22px; height: 22px; color: #222; }
.tb-search-text { margin-left: 14px; font-size: 19.500px; color: #444; }
.ic-study { width: 70px; height: 36px; margin-left: auto; margin-right: 3px; }
.tb-apps { display: flex; margin-left: 3px; }
.tb-app { width: 66px; height: 71px; display: flex; align-items: center; justify-content: center; position: relative; }
.tb-tile { width: 50px; height: 56px; margin-left: -2px; background: rgba(255,255,255,.5); border-radius: 6px; box-shadow: 5px 0 0 -1px rgba(255,255,255,.3); display: flex; align-items: center; justify-content: center; }
.tb-bar { position: absolute; left: 20px; bottom: 7px; width: 24px; height: 5px; border-radius: 3px; background: #0078d4; }
.tb-dot { position: absolute; left: 29px; bottom: 8px; width: 9px; height: 5px; border-radius: 3px; background: #73766a; }
.tray { margin-left: auto; display: flex; align-items: center; padding-right: 30px; }
.ic-tray-chev { width: 20px; height: 12px; }
.tray-wifi { margin-left: 26px; }
.tray-vol { margin-left: 9px; }
.ic-batt { width: 26px; height: 18px; margin-left: 12px; }
.clock { width: 100px; margin-left: 7px; display: flex; flex-direction: column; align-items: flex-end; font-size: 17.500px; line-height: 25px; color: #222; }
.ic-zz { width: 24px; height: 26px; margin-left: 11px; }
.ic-pre { width: 36px; height: 32px; margin-left: 24px; }
```
